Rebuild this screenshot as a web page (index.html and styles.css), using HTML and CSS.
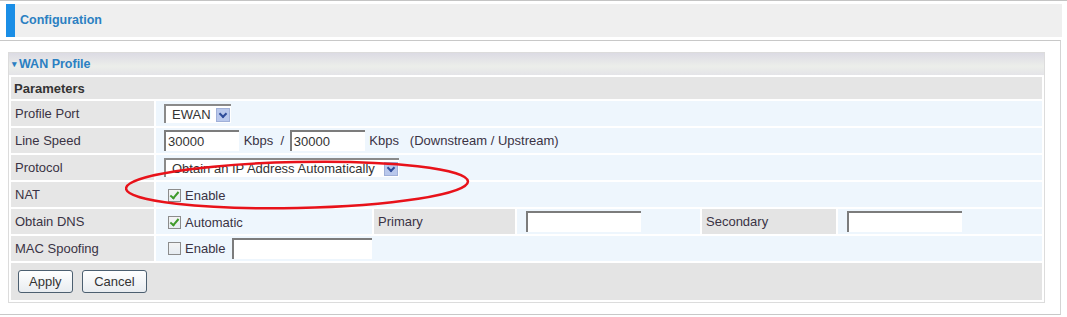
FILE: index.html
```html
<!DOCTYPE html>
<html lang="en">
<head>
  <meta charset="utf-8">
  <title>Configuration - WAN Profile</title>
  <link rel="stylesheet" href="styles.css">
</head>
<body>
  <div class="page">
    <div class="config-bar">Configuration</div>
  </div>

  <div class="content">
    <div class="panel">
      <div class="panel-head"><span class="caret">&#9662;</span>WAN Profile</div>

      <table class="params">
        <tr>
          <th colspan="6" class="section">Parameters</th>
        </tr>
        <tr>
          <td class="label">Profile Port</td>
          <td class="value" colspan="5">
            <span class="select select-port">EWAN<span class="arrow"></span></span>
          </td>
        </tr>
        <tr>
          <td class="label">Line Speed</td>
          <td class="value" colspan="5">
            <input type="text" class="field speed" value="30000">
            <span class="unit">Kbps &nbsp;/</span>
            <input type="text" class="field speed" value="30000">
            <span class="unit">Kbps &nbsp; (Downstream / Upstream)</span>
          </td>
        </tr>
        <tr>
          <td class="label">Protocol</td>
          <td class="value" colspan="5">
            <span class="select select-proto">Obtain an IP Address Automatically<span class="arrow"></span></span>
          </td>
        </tr>
        <tr>
          <td class="label">NAT</td>
          <td class="value" colspan="5">
            <span class="check on"></span><span class="check-text">Enable</span>
          </td>
        </tr>
        <tr>
          <td class="label">Obtain DNS</td>
          <td class="value dns-auto">
            <span class="check on"></span><span class="check-text">Automatic</span>
          </td>
          <td class="label sub primary">Primary</td>
          <td class="value dns-in"><input type="text" class="field dns"></td>
          <td class="label sub secondary">Secondary</td>
          <td class="value"><input type="text" class="field dns"></td>
        </tr>
        <tr>
          <td class="label">MAC Spoofing</td>
          <td class="value" colspan="5">
            <span class="check"></span><span class="check-text">Enable</span>
            <input type="text" class="field mac">
          </td>
        </tr>
        <tr>
          <td colspan="6" class="actions">
            <button class="btn">Apply</button>
            <button class="btn">Cancel</button>
          </td>
        </tr>
      </table>
    </div>

    <!-- highlight round the protocol choice -->
    <svg class="mark" width="360" height="60" viewBox="0 0 360 60">
      <ellipse cx="172" cy="30" rx="171" ry="23" fill="none" stroke="#e8121a" stroke-width="2.5" transform="rotate(-1.2 172 30)"/>
    </svg>
  </div>
</body>
</html>
```

FILE: styles.css
```css
body {
  margin: 0;
  font-family: "Liberation Sans", Arial, sans-serif;
  font-size: 13px;
  color: #3a3344;
  background: #fff;
}

.page {
  border-top: 1px solid #c4c4c4;
  padding: 3px 5px 3px 6px;
}

.config-bar {
  height: 33px;
  line-height: 32px;
  background: #efefef;
  border-left: 9px solid #1a8ee6;
  padding-left: 5px;
  font-weight: bold;
  font-size: 12.5px;
  color: #2b80c2;
}

.content {
  position: relative;
  border-top: 1px solid #c8c8c8;
  border-right: 1px solid #d4d4d4;
  border-bottom: 1px solid #c8c8c8;
  width: 1061px;
  padding: 11px 0 9px 8px;
  box-sizing: border-box;
  height: 275px;
}

.panel {
  width: 1037px;
  border: 1px solid #dcdcdc;
  box-sizing: border-box;
  background: #fff;
}

.panel-head {
  height: 22px;
  line-height: 22px;
  padding-left: 3px;
  background: linear-gradient(#dcdbe4, #eceeea 60%, #e4e4e8);
  font-weight: bold;
  font-size: 12.5px;
  color: #2b80c2;
}

.caret {
  font-size: 9px;
  margin-right: 2px;
  position: relative;
  top: -1px;
}

.params {
  width: 100%;
  border-collapse: separate;
  border-spacing: 2px;
}

.params td,
.params th {
  padding: 0;
  height: 25px;
}

.section {
  height: 22px !important;
  background: #e5e5e5;
  text-align: left;
  padding-left: 3px !important;
  font-weight: bold;
  font-size: 13px;
  color: #333;
}

.label {
  width: 139px;
  background: #e6e6e6;
  padding-left: 4px !important;
}

.label.sub {
  background: #e4e4e4;
}

.primary { width: 137px; }
.secondary { width: 130px; }

.value {
  background: #eef6fd;
  padding-left: 7px !important;
  white-space: nowrap;
}

.dns-auto { width: 209px; }
.dns-in { width: 176px; }

.select {
  display: inline-flex;
  align-items: center;
  height: 19px;
  padding-left: 6px;
  background: #fff;
  border-top: 2px solid #8a8a8a;
  border-left: 2px solid #8a8a8a;
  box-sizing: border-box;
  vertical-align: middle;
  color: #333;
}

.select-port { width: 67px; margin-left: 1px; }
.select-proto { width: 235px; margin-left: 1px; }

.arrow {
  display: inline-block;
  width: 14px;
  height: 14px;
  margin-left: auto;
  margin-right: 1px;
  background: #b9c8ec;
  border: 1px solid #a0b0d8;
  box-sizing: border-box;
  position: relative;
}

.arrow::after {
  content: "";
  position: absolute;
  left: 3px;
  top: 2px;
  width: 4px;
  height: 4px;
  border-right: 2px solid #2e4c9a;
  border-bottom: 2px solid #2e4c9a;
  transform: rotate(45deg);
}

.field {
  height: 21px;
  box-sizing: border-box;
  border: none;
  border-top: 2px solid #7c7c7c;
  border-left: 2px solid #7c7c7c;
  background: #fff;
  font-family: inherit;
  font-size: 13px;
  color: #333;
  padding: 0 2px;
  vertical-align: middle;
  margin: 0 0 0 1px;
}

.speed { width: 75px; }
.dns { width: 115px; margin-left: 2px; }
.mac { width: 140px; margin-left: 3px; }

.unit {
  margin: 0 1px;
  vertical-align: middle;
}

.check {
  display: inline-block;
  width: 13px;
  height: 13px;
  border: 1px solid #8c8c8c;
  box-sizing: border-box;
  background: linear-gradient(#f4f4f4, #e6ecf2);
  vertical-align: middle;
  position: relative;
  margin-left: 5px;
}

.check.on::after {
  content: "";
  position: absolute;
  left: 3px;
  top: 0;
  width: 3px;
  height: 7px;
  border-right: 2px solid #3f9a2a;
  border-bottom: 2px solid #3f9a2a;
  transform: rotate(40deg);
}

.check-text {
  margin-left: 4px;
  vertical-align: middle;
}

.actions {
  height: 37px !important;
  background: #e4e4e4;
  padding-left: 7px !important;
}

.btn {
  font-family: inherit;
  font-size: 13px;
  color: #333;
  height: 23px;
  padding: 0 10px;
  border: 1px solid #4c5f70;
  border-radius: 3px;
  background: linear-gradient(#ffffff, #e8ecf0);
  margin-right: 6px;
}

.btn + .btn {
  padding: 0 11px;
}

.mark {
  position: absolute;
  left: 125px;
  top: 114px;
}
```
